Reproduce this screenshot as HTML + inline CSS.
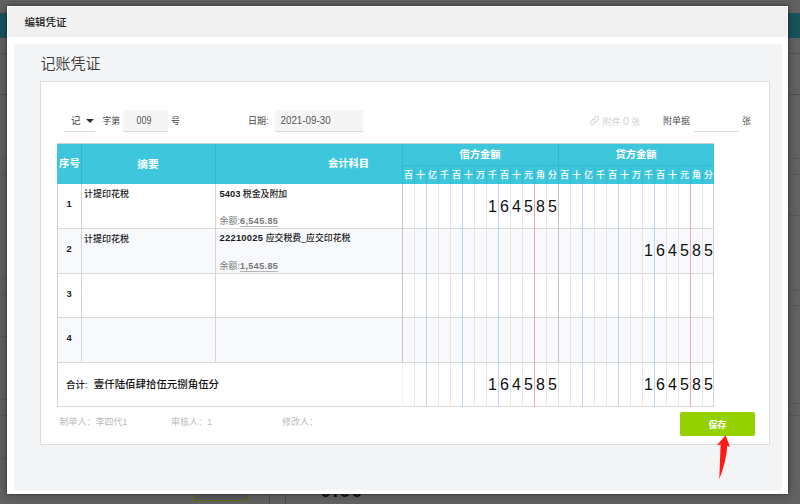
<!DOCTYPE html>
<html lang="zh-CN"><head><meta charset="utf-8"><title>编辑凭证</title>
<style>
html,body{margin:0;padding:0}
body{width:800px;height:504px;overflow:hidden;position:relative;background:#5a5a5a;
 font-family:"Liberation Sans","Noto Sans CJK SC",sans-serif;font-size:9px;color:#333}
.a{position:absolute;white-space:nowrap}
.t{position:absolute;white-space:nowrap;line-height:14px;height:14px}
.b{font-weight:bold}
.vl{position:absolute;width:1px}
.hl{position:absolute;height:1px}
</style></head><body>

<div class="a" style="left:0;top:0;width:800px;height:13px;background:#616362"></div>
<div class="a" style="left:0;top:13px;width:800px;height:25px;background:#1a535b"></div>
<div class="a" style="left:0;top:38px;width:800px;height:466px;background:#616362"></div>
<div class="hl" style="left:0;top:53px;width:800px;background:#535353"></div>
<div class="hl" style="left:0;top:94px;width:800px;background:#505050"></div>
<div class="hl" style="left:0;top:158px;width:8px;background:#575958"></div>
<div class="hl" style="left:0;top:174px;width:8px;background:#575958"></div>
<div class="hl" style="left:0;top:278px;width:8px;background:#575958"></div>
<div class="hl" style="left:0;top:294px;width:8px;background:#575958"></div>
<div class="hl" style="left:0;top:336px;width:8px;background:#575958"></div>
<div class="hl" style="left:0;top:399px;width:8px;background:#575958"></div>
<div class="hl" style="left:0;top:415px;width:8px;background:#575958"></div>
<div class="hl" style="left:0;top:458px;width:8px;background:#575958"></div>
<div class="hl" style="left:787px;top:158px;width:13px;background:#575958"></div>
<div class="hl" style="left:787px;top:174px;width:13px;background:#575958"></div>
<div class="hl" style="left:787px;top:215px;width:13px;background:#575958"></div>
<div class="hl" style="left:787px;top:290px;width:13px;background:#575958"></div>
<div class="hl" style="left:787px;top:305px;width:13px;background:#575958"></div>
<div class="hl" style="left:787px;top:403px;width:13px;background:#575958"></div>
<div class="hl" style="left:787px;top:415px;width:13px;background:#575958"></div>
<div class="a" style="left:193px;top:480px;width:53px;height:18.5px;border:1px solid #5c7010;border-radius:2px;background:#5a595d"></div>
<div class="vl" style="left:269px;top:470px;height:34px;background:#4c4c4c"></div>
<div class="vl" style="left:285px;top:470px;height:34px;background:#4c4c4c"></div>
<div class="t b" style="left:320.5px;top:483.6px;font-size:19px;color:#111;letter-spacing:1.6px">0.00</div>
<div class="a" style="left:7px;top:6px;width:781px;height:488px;background:#fff;box-shadow:0 0 9px 1px rgba(0,0,0,.28),0 0 2px rgba(0,0,0,.55)"></div>
<div class="a" style="left:8px;top:7px;width:779px;height:29.5px;background:#f0f0f0"></div>
<div class="t" style="left:24.5px;top:14.5px;font-size:10.5px;color:#222;font-weight:500">编辑凭证</div>
<div class="a" style="left:14px;top:44px;width:768px;height:446px;background:#f3f4f6"></div>
<div class="t" style="left:40.5px;top:53.5px;line-height:20px;height:20px;font-size:15px;color:#3a3a3a;font-weight:350">记账凭证</div>
<div class="a" style="left:40px;top:81px;width:728px;height:361.5px;background:#fff;border:1px solid #ddd"></div>
<div class="hl" style="left:63.5px;top:130.5px;width:31.5px;background:#ddd"></div>
<div class="t" style="left:71px;top:113.5px;font-size:9.5px;color:#444">记</div>
<div class="a" style="left:86px;top:118.5px;width:0;height:0;border-left:4px solid transparent;border-right:4px solid transparent;border-top:4.5px solid #333"></div>
<div class="t" style="left:102.5px;top:113.5px;font-size:8.8px;color:#444">字第</div>
<div class="a" style="left:123px;top:110px;width:45px;height:20.5px;background:#f5f5f5;border-bottom:1px solid #ddd"></div>
<div class="t" style="left:136.2px;top:113.5px;font-size:9.5px;color:#555;transform:scale(.95,1.12)">009</div>
<div class="t" style="left:171px;top:113.5px;font-size:9px;color:#444">号</div>
<div class="t" style="left:248px;top:113.5px;font-size:9px;color:#444">日期:</div>
<div class="a" style="left:275px;top:110px;width:88px;height:20.5px;background:#f5f5f5;border-bottom:1px solid #ddd"></div>
<div class="t" style="left:280.5px;top:113.5px;font-size:9.8px;color:#555;transform:scale(1,1.12);transform-origin:0 50%">2021-09-30</div>
<svg class="a" style="left:589px;top:115px" width="11" height="11" viewBox="0 0 11 11"><g fill="none" stroke="#d6d6d6" stroke-width="1.05" stroke-linecap="round"><path d="M4.6 6.4a2 2 0 0 0 2.8 0l1.8-1.8a2 2 0 0 0-2.8-2.8l-.8.8"/><path d="M6.4 4.6a2 2 0 0 0-2.8 0L1.8 6.4a2 2 0 0 0 2.8 2.8l.8-.8"/></g></svg>
<div class="t" style="left:602.5px;top:113.5px;font-size:9px;color:#d0d0d0">附件 <span style="font-size:10.5px">0</span> 张</div>
<div class="t" style="left:663px;top:113.5px;font-size:9px;color:#505050">附单据</div>
<div class="hl" style="left:694px;top:130.5px;width:45px;background:#ddd"></div>
<div class="t" style="left:742px;top:113.5px;font-size:9px;color:#555">张</div>
<div class="a" style="left:57px;top:143px;width:657px;height:41px;background:#3ec6dc;border-top:1px solid #c9d6d9;box-sizing:border-box"></div>
<div class="a" style="left:57px;top:228.5px;width:657px;height:44.5px;background:#f8f9fd"></div>
<div class="a" style="left:57px;top:317.5px;width:657px;height:44.5px;background:#f8f9fd"></div>
<div class="vl" style="left:81px;top:144px;height:40px;background:#36b6cb"></div>
<div class="vl" style="left:215px;top:144px;height:40px;background:#36b6cb"></div>
<div class="vl" style="left:402px;top:144px;height:40px;background:#36b6cb"></div>
<div class="vl" style="left:558px;top:144px;height:40px;background:#36b6cb"></div>
<div class="hl" style="left:402px;top:165px;width:312px;background:#36b6cb"></div>
<div class="vl" style="left:414px;top:166px;height:18px;background:#36b6cb"></div>
<div class="vl" style="left:426px;top:166px;height:18px;background:#36b6cb"></div>
<div class="vl" style="left:438px;top:166px;height:18px;background:#36b6cb"></div>
<div class="vl" style="left:450px;top:166px;height:18px;background:#36b6cb"></div>
<div class="vl" style="left:462px;top:166px;height:18px;background:#36b6cb"></div>
<div class="vl" style="left:474px;top:166px;height:18px;background:#36b6cb"></div>
<div class="vl" style="left:486px;top:166px;height:18px;background:#36b6cb"></div>
<div class="vl" style="left:498px;top:166px;height:18px;background:#36b6cb"></div>
<div class="vl" style="left:510px;top:166px;height:18px;background:#36b6cb"></div>
<div class="vl" style="left:522px;top:166px;height:18px;background:#36b6cb"></div>
<div class="vl" style="left:534px;top:166px;height:18px;background:#36b6cb"></div>
<div class="vl" style="left:546px;top:166px;height:18px;background:#36b6cb"></div>
<div class="vl" style="left:570px;top:166px;height:18px;background:#36b6cb"></div>
<div class="vl" style="left:582px;top:166px;height:18px;background:#36b6cb"></div>
<div class="vl" style="left:594px;top:166px;height:18px;background:#36b6cb"></div>
<div class="vl" style="left:606px;top:166px;height:18px;background:#36b6cb"></div>
<div class="vl" style="left:618px;top:166px;height:18px;background:#36b6cb"></div>
<div class="vl" style="left:630px;top:166px;height:18px;background:#36b6cb"></div>
<div class="vl" style="left:642px;top:166px;height:18px;background:#36b6cb"></div>
<div class="vl" style="left:654px;top:166px;height:18px;background:#36b6cb"></div>
<div class="vl" style="left:666px;top:166px;height:18px;background:#36b6cb"></div>
<div class="vl" style="left:678px;top:166px;height:18px;background:#36b6cb"></div>
<div class="vl" style="left:690px;top:166px;height:18px;background:#36b6cb"></div>
<div class="vl" style="left:702px;top:166px;height:18px;background:#36b6cb"></div>
<div class="t" style="left:57px;width:25px;text-align:center;top:157px;color:#fff;font-weight:bold;font-size:10.4px">序号</div>
<div class="t" style="left:81px;width:134px;text-align:center;top:157px;color:#fff;font-weight:bold;font-size:10.4px;font-size:10.7px">摘要</div>
<div class="t" style="left:327px;width:43px;text-align:center;top:157px;color:#fff;font-weight:bold;font-size:10.4px;font-size:10.3px">会计科目</div>
<div class="t" style="left:402px;width:156px;text-align:center;top:147.5px;color:#fff;font-weight:bold;font-size:10.4px;font-size:10.3px">借方金额</div>
<div class="t" style="left:558px;width:156px;text-align:center;top:147.5px;color:#fff;font-weight:bold;font-size:10.4px;font-size:10.3px">贷方金额</div>
<div class="t" style="left:402px;width:13px;text-align:center;top:168px;color:#fff;font-size:9px;font-weight:500">百</div>
<div class="t" style="left:414px;width:13px;text-align:center;top:168px;color:#fff;font-size:9px;font-weight:500">十</div>
<div class="t" style="left:426px;width:13px;text-align:center;top:168px;color:#fff;font-size:9px;font-weight:500">亿</div>
<div class="t" style="left:438px;width:13px;text-align:center;top:168px;color:#fff;font-size:9px;font-weight:500">千</div>
<div class="t" style="left:450px;width:13px;text-align:center;top:168px;color:#fff;font-size:9px;font-weight:500">百</div>
<div class="t" style="left:462px;width:13px;text-align:center;top:168px;color:#fff;font-size:9px;font-weight:500">十</div>
<div class="t" style="left:474px;width:13px;text-align:center;top:168px;color:#fff;font-size:9px;font-weight:500">万</div>
<div class="t" style="left:486px;width:13px;text-align:center;top:168px;color:#fff;font-size:9px;font-weight:500">千</div>
<div class="t" style="left:498px;width:13px;text-align:center;top:168px;color:#fff;font-size:9px;font-weight:500">百</div>
<div class="t" style="left:510px;width:13px;text-align:center;top:168px;color:#fff;font-size:9px;font-weight:500">十</div>
<div class="t" style="left:522px;width:13px;text-align:center;top:168px;color:#fff;font-size:9px;font-weight:500">元</div>
<div class="t" style="left:534px;width:13px;text-align:center;top:168px;color:#fff;font-size:9px;font-weight:500">角</div>
<div class="t" style="left:546px;width:13px;text-align:center;top:168px;color:#fff;font-size:9px;font-weight:500">分</div>
<div class="t" style="left:558px;width:13px;text-align:center;top:168px;color:#fff;font-size:9px;font-weight:500">百</div>
<div class="t" style="left:570px;width:13px;text-align:center;top:168px;color:#fff;font-size:9px;font-weight:500">十</div>
<div class="t" style="left:582px;width:13px;text-align:center;top:168px;color:#fff;font-size:9px;font-weight:500">亿</div>
<div class="t" style="left:594px;width:13px;text-align:center;top:168px;color:#fff;font-size:9px;font-weight:500">千</div>
<div class="t" style="left:606px;width:13px;text-align:center;top:168px;color:#fff;font-size:9px;font-weight:500">百</div>
<div class="t" style="left:618px;width:13px;text-align:center;top:168px;color:#fff;font-size:9px;font-weight:500">十</div>
<div class="t" style="left:630px;width:13px;text-align:center;top:168px;color:#fff;font-size:9px;font-weight:500">万</div>
<div class="t" style="left:642px;width:13px;text-align:center;top:168px;color:#fff;font-size:9px;font-weight:500">千</div>
<div class="t" style="left:654px;width:13px;text-align:center;top:168px;color:#fff;font-size:9px;font-weight:500">百</div>
<div class="t" style="left:666px;width:13px;text-align:center;top:168px;color:#fff;font-size:9px;font-weight:500">十</div>
<div class="t" style="left:678px;width:13px;text-align:center;top:168px;color:#fff;font-size:9px;font-weight:500">元</div>
<div class="t" style="left:690px;width:13px;text-align:center;top:168px;color:#fff;font-size:9px;font-weight:500">角</div>
<div class="t" style="left:702px;width:13px;text-align:center;top:168px;color:#fff;font-size:9px;font-weight:500">分</div>
<div class="hl" style="left:57px;top:228.0px;width:657px;background:#d9d9d9"></div>
<div class="hl" style="left:57px;top:272.5px;width:657px;background:#d9d9d9"></div>
<div class="hl" style="left:57px;top:317.0px;width:657px;background:#d9d9d9"></div>
<div class="hl" style="left:57px;top:361.5px;width:657px;background:#d9d9d9"></div>
<div class="hl" style="left:57px;top:406.0px;width:657px;background:#d9d9d9"></div>
<div class="vl" style="left:57px;top:184px;height:222.5px;background:#d4d4d4"></div>
<div class="vl" style="left:713px;top:184px;height:222.5px;background:#d4d4d4"></div>
<div class="vl" style="left:81px;top:184px;height:178px;background:#d4d4d4"></div>
<div class="vl" style="left:215px;top:184px;height:178px;background:#d4d4d4"></div>
<div class="vl" style="left:402px;top:184px;height:178px;background:#c4c4c4"></div>
<div class="vl" style="left:558px;top:184px;height:178px;background:#c4c4c4"></div>
<div class="vl" style="left:414px;top:184px;height:222.5px;background:#e6e6e6"></div>
<div class="vl" style="left:426px;top:184px;height:222.5px;background:#bcd6f2"></div>
<div class="vl" style="left:438px;top:184px;height:222.5px;background:#e6e6e6"></div>
<div class="vl" style="left:450px;top:184px;height:222.5px;background:#e6e6e6"></div>
<div class="vl" style="left:462px;top:184px;height:222.5px;background:#bcd6f2"></div>
<div class="vl" style="left:474px;top:184px;height:222.5px;background:#e6e6e6"></div>
<div class="vl" style="left:486px;top:184px;height:222.5px;background:#e6e6e6"></div>
<div class="vl" style="left:498px;top:184px;height:222.5px;background:#bcd6f2"></div>
<div class="vl" style="left:510px;top:184px;height:222.5px;background:#e6e6e6"></div>
<div class="vl" style="left:522px;top:184px;height:222.5px;background:#e6e6e6"></div>
<div class="vl" style="left:534px;top:184px;height:222.5px;background:#f3a9a9"></div>
<div class="vl" style="left:546px;top:184px;height:222.5px;background:#e6e6e6"></div>
<div class="vl" style="left:570px;top:184px;height:222.5px;background:#e6e6e6"></div>
<div class="vl" style="left:582px;top:184px;height:222.5px;background:#bcd6f2"></div>
<div class="vl" style="left:594px;top:184px;height:222.5px;background:#e6e6e6"></div>
<div class="vl" style="left:606px;top:184px;height:222.5px;background:#e6e6e6"></div>
<div class="vl" style="left:618px;top:184px;height:222.5px;background:#bcd6f2"></div>
<div class="vl" style="left:630px;top:184px;height:222.5px;background:#e6e6e6"></div>
<div class="vl" style="left:642px;top:184px;height:222.5px;background:#e6e6e6"></div>
<div class="vl" style="left:654px;top:184px;height:222.5px;background:#bcd6f2"></div>
<div class="vl" style="left:666px;top:184px;height:222.5px;background:#e6e6e6"></div>
<div class="vl" style="left:678px;top:184px;height:222.5px;background:#e6e6e6"></div>
<div class="vl" style="left:690px;top:184px;height:222.5px;background:#f3a9a9"></div>
<div class="vl" style="left:702px;top:184px;height:222.5px;background:#e6e6e6"></div>
<div class="vl" style="left:402px;top:362.5px;height:44px;background:#efefef"></div>
<div class="vl" style="left:558px;top:362.5px;height:44px;background:#e2e2e2"></div>
<div class="t" style="left:57px;width:24px;text-align:center;top:197px;font-weight:bold;font-size:9.4px;color:#222">1</div>
<div class="t" style="left:57px;width:24px;text-align:center;top:241.5px;font-weight:bold;font-size:9.4px;color:#222">2</div>
<div class="t" style="left:57px;width:24px;text-align:center;top:286.5px;font-weight:bold;font-size:9.4px;color:#222">3</div>
<div class="t" style="left:57px;width:24px;text-align:center;top:331px;font-weight:bold;font-size:9.4px;color:#222">4</div>
<div class="t" style="left:84px;top:187px;font-weight:500;font-size:9px;color:#1a1a1a">计提印花税</div>
<div class="t" style="left:84px;top:231.5px;font-weight:500;font-size:9px;color:#1a1a1a">计提印花税</div>
<div class="t" style="left:219.5px;top:186.5px;font-weight:500;font-size:9px;color:#1a1a1a;font-size:8.9px"><span style="font-size:9.4px;font-weight:bold">5403</span> 税金及附加</div>
<div class="t" style="left:219.5px;top:231px;font-weight:500;font-size:9px;color:#1a1a1a;font-size:8.9px"><span style="font-size:9.4px;letter-spacing:.25px;font-weight:bold">22210025</span> 应交税费_应交印花税</div>
<div class="t" style="left:219.5px;top:214px;font-size:9px;color:#7c7c7c">余额:<span style="border-bottom:1px solid #b5b5b5;display:inline-block;line-height:10px;font-weight:bold;letter-spacing:0.4px;color:#777">6,545.85</span></div>
<div class="t" style="left:219.5px;top:258.5px;font-size:9px;color:#7c7c7c">余额:<span style="border-bottom:1px solid #b5b5b5;display:inline-block;line-height:10px;font-weight:bold;letter-spacing:0.4px;color:#777">1,545.85</span></div>
<div class="t" style="left:486px;width:13px;text-align:center;top:199.5px;font-size:16px;color:#111;line-height:14px">1</div>
<div class="t" style="left:498px;width:13px;text-align:center;top:199.5px;font-size:16px;color:#111;line-height:14px">6</div>
<div class="t" style="left:510px;width:13px;text-align:center;top:199.5px;font-size:16px;color:#111;line-height:14px">4</div>
<div class="t" style="left:522px;width:13px;text-align:center;top:199.5px;font-size:16px;color:#111;line-height:14px">5</div>
<div class="t" style="left:534px;width:13px;text-align:center;top:199.5px;font-size:16px;color:#111;line-height:14px">8</div>
<div class="t" style="left:546px;width:13px;text-align:center;top:199.5px;font-size:16px;color:#111;line-height:14px">5</div>
<div class="t" style="left:642px;width:13px;text-align:center;top:244px;font-size:16px;color:#111;line-height:14px">1</div>
<div class="t" style="left:654px;width:13px;text-align:center;top:244px;font-size:16px;color:#111;line-height:14px">6</div>
<div class="t" style="left:666px;width:13px;text-align:center;top:244px;font-size:16px;color:#111;line-height:14px">4</div>
<div class="t" style="left:678px;width:13px;text-align:center;top:244px;font-size:16px;color:#111;line-height:14px">5</div>
<div class="t" style="left:690px;width:13px;text-align:center;top:244px;font-size:16px;color:#111;line-height:14px">8</div>
<div class="t" style="left:702px;width:13px;text-align:center;top:244px;font-size:16px;color:#111;line-height:14px">5</div>
<div class="t" style="left:486px;width:13px;text-align:center;top:377.5px;font-size:16px;color:#111;line-height:14px">1</div>
<div class="t" style="left:498px;width:13px;text-align:center;top:377.5px;font-size:16px;color:#111;line-height:14px">6</div>
<div class="t" style="left:510px;width:13px;text-align:center;top:377.5px;font-size:16px;color:#111;line-height:14px">4</div>
<div class="t" style="left:522px;width:13px;text-align:center;top:377.5px;font-size:16px;color:#111;line-height:14px">5</div>
<div class="t" style="left:534px;width:13px;text-align:center;top:377.5px;font-size:16px;color:#111;line-height:14px">8</div>
<div class="t" style="left:546px;width:13px;text-align:center;top:377.5px;font-size:16px;color:#111;line-height:14px">5</div>
<div class="t" style="left:642px;width:13px;text-align:center;top:377.5px;font-size:16px;color:#111;line-height:14px">1</div>
<div class="t" style="left:654px;width:13px;text-align:center;top:377.5px;font-size:16px;color:#111;line-height:14px">6</div>
<div class="t" style="left:666px;width:13px;text-align:center;top:377.5px;font-size:16px;color:#111;line-height:14px">4</div>
<div class="t" style="left:678px;width:13px;text-align:center;top:377.5px;font-size:16px;color:#111;line-height:14px">5</div>
<div class="t" style="left:690px;width:13px;text-align:center;top:377.5px;font-size:16px;color:#111;line-height:14px">8</div>
<div class="t" style="left:702px;width:13px;text-align:center;top:377.5px;font-size:16px;color:#111;line-height:14px">5</div>
<div class="t" style="left:66px;top:378px;font-weight:500;font-size:9px;color:#1a1a1a;font-size:9.5px">合计:</div>
<div class="t" style="left:93.8px;top:378px;font-weight:500;font-size:10.45px;color:#111">壹仟陆佰肆拾伍元捌角伍分</div>
<div class="t" style="left:59.5px;top:415px;font-size:9px;color:#bbb">制单人：李四代1</div>
<div class="t" style="left:171px;top:415px;font-size:9px;color:#bbb">审核人：1</div>
<div class="t" style="left:282px;top:415px;font-size:9px;color:#bbb">修改人：</div>
<div class="a" style="left:680px;top:412px;width:75px;height:24px;background:#95d100;border-radius:2px"></div>
<div class="t" style="left:680px;width:75px;text-align:center;top:417.5px;color:#fff;font-weight:bold;font-size:9px">保存</div>
<svg class="a" style="left:700px;top:428px" width="60" height="60" viewBox="700 428 60 60"><path fill="#ff1a14" d="M725.6 435.2L730 447.1L727.2 445.8Q726.6 460.6 719.3 479.3L720.6 444.4L716.9 445.2Z"/></svg>
</body></html>
